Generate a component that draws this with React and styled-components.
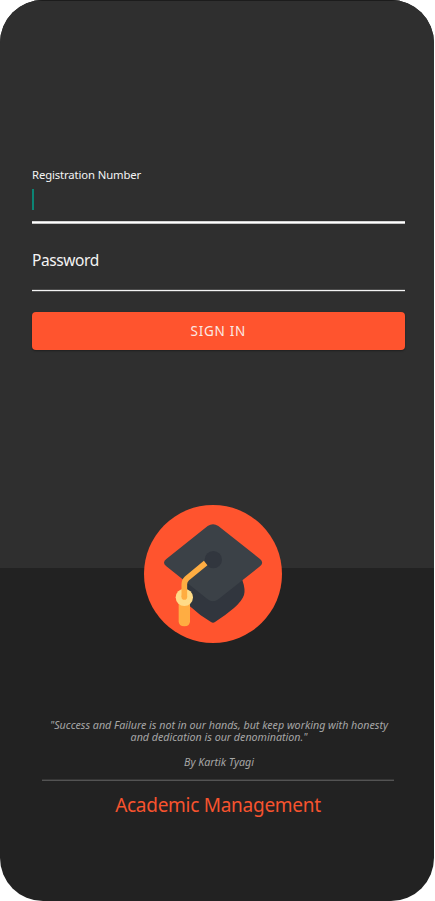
import React from "react";
import styled, { createGlobalStyle } from "styled-components";

const GlobalStyle = createGlobalStyle`
  * { box-sizing: border-box; }
  body {
    margin: 0;
    background: #fff;
    font-family: "Noto Sans", "Open Sans", sans-serif;
  }
`;

const Screen = styled.main`
  display: flex;
  flex-direction: column;
  width: 434px;
  height: 901px;
  border-radius: 43px;
  overflow: hidden;
  background: #222222;
`;

const Form = styled.form`
  display: flex;
  flex-direction: column;
  flex: none;
  height: 568px;
  padding: 167px 29.5px 0 32px;
  background: #2f2f2f;
  box-shadow: inset 0 1px 0 #1c1c1c;
`;

const Field = styled.label`
  display: flex;
  flex-direction: column;
  justify-content: space-between;
  height: ${(p) => (p.$active ? 57 : 68)}px;
  padding-top: ${(p) => (p.$active ? 0 : 25)}px;
  color: #f4f4f4;
`;

const FieldName = styled.span`
  height: ${(p) => (p.$small ? 16 : 22)}px;
  font-size: ${(p) => (p.$small ? 11.3 : 15.5)}px;
  line-height: ${(p) => (p.$small ? 16 : 22)}px;
  letter-spacing: ${(p) => p.$track}px;
`;

const Caret = styled.span`
  width: 2px;
  height: 21px;
  margin-bottom: 5px;
  background: #0c8474;
`;

const Underline = styled.span`
  height: 3px;
  background: ${(p) =>
    p.$active
      ? "linear-gradient(#d4d4d4 1px, #ffffff 1px 2px, #c4c4c4 2px)"
      : "linear-gradient(#4c4c4c 1px, #f4f4f4 1px 2px, #545454 2px)"};
`;

const Button = styled.button`
  height: 38px;
  margin-top: 20px;
  padding: 0;
  border: 0;
  border-radius: 4px;
  background: #ff542e;
  box-shadow: 0 1px 2px rgba(0, 0, 0, 0.35);
  color: #fbe9e4;
  font: 400 13.5px/39px "Noto Sans", "Open Sans", sans-serif;
  letter-spacing: 0.7px;
`;

const Footer = styled.footer`
  display: flex;
  flex-direction: column;
  align-items: center;
  width: 426px;
`;

const Emblem = styled.svg`
  display: block;
  width: 138px;
  height: 138px;
  margin-top: -63px;
  z-index: 1;
`;

const Quote = styled.blockquote`
  margin: 76px 0 0 12px;
  color: #a6a6a6;
  font-size: 10.7px;
  font-style: italic;
  line-height: 12px;
  text-align: center;
  white-space: nowrap;
`;

const Author = styled.cite`
  margin: 13px 0 0 12px;
  color: #a6a6a6;
  font-size: 10.7px;
  line-height: 12px;
`;

const Divider = styled.hr`
  width: 352px;
  height: 2px;
  margin: 11px 0 0 10px;
  border: 0;
  background: linear-gradient(#363636 1px, #535353 1px);
`;

const Brand = styled.h1`
  margin: 10px 0 0 10px;
  color: #f7532e;
  font-size: 19px;
  font-weight: 400;
  line-height: 28px;
  letter-spacing: -0.27px;
`;

const GraduationEmblem = () => (
  <Emblem viewBox="27 29 414 414" aria-label="Graduation cap">
    <circle cx="234" cy="236" r="207" fill="#ff542e" />
    <path
      d="M148 240 L322 254 Q332 283 327 299 Q321 317 297 338 Q270 361 240 380 Q234 385 228 380 Q194 360 163 331 Z"
      fill="#31363e"
    />
    <path
      d="M218 92 Q234 82 250 92 L375 191 Q388 202 375 213 L251 311 Q234 325 217 311 L94 213 Q80 202 94 191 Z"
      fill="#3b4147"
    />
    <circle cx="235" cy="193" r="26" fill="#31363e" />
    <path d="M131 306 H165 V378 Q165 393 148 393 Q131 393 131 378 Z" fill="#ffad42" />
    <circle cx="148" cy="306" r="26" fill="#ffdb87" />
    <path
      d="M212 203 L156 249 Q148 256 148 267 V305"
      fill="none"
      stroke="#ffad42"
      strokeWidth="17"
    />
    <circle cx="148" cy="305" r="8.5" fill="#ffad42" />
  </Emblem>
);

export default function App() {
  return (
    <>
      <GlobalStyle />
      <Screen>
        <Form>
          <Field $active>
            <FieldName $small $track={-0.12}>Registration Number</FieldName>
            <Caret />
            <Underline $active />
          </Field>
          <Field>
            <FieldName $track={-0.4}>Password</FieldName>
            <Underline />
          </Field>
          <Button type="button">SIGN IN</Button>
        </Form>
        <Footer>
          <GraduationEmblem />
          <Quote>
            "Success and Failure is not in our hands, but keep working with honesty
            <br />
            and dedication is our denomination."
          </Quote>
          <Author>By Kartik Tyagi</Author>
          <Divider />
          <Brand>Academic Management</Brand>
        </Footer>
      </Screen>
    </>
  );
}
